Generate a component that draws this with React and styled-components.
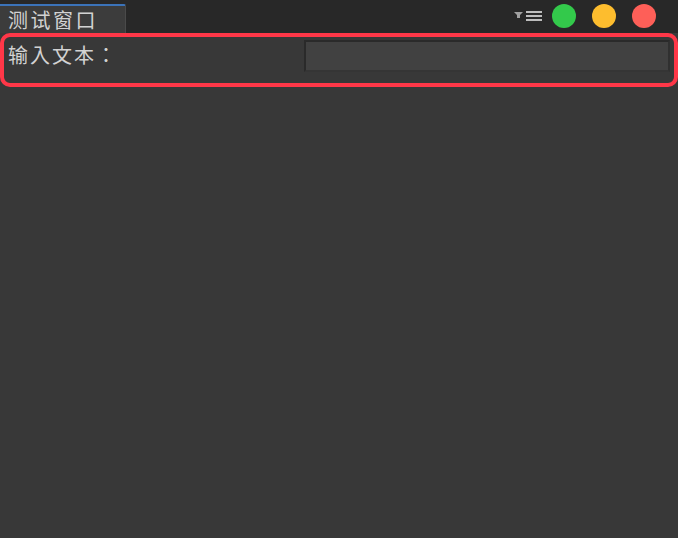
import styled, { createGlobalStyle } from "styled-components";

const Global = createGlobalStyle`
  html, body {
    margin: 0;
    padding: 0;
    background: #383838;
  }
  body {
    font-family: "Noto Sans CJK SC", "Noto Sans", sans-serif;
  }
`;

export default function App() {
  return (
    <Window>
      <Global />
      <Header>
        <Tab>测试窗口</Tab>
        <Controls>
          <MenuIcon width="28" height="12" viewBox="0 0 28 12">
            <path d="M0 2h9l-3 3v3h-3v-3z" fill="#a0a0a0" />
            <rect x="12" y="1" width="16" height="2" fill="#bdbdbd" />
            <rect x="12" y="5" width="16" height="2" fill="#bdbdbd" />
            <rect x="12" y="9" width="16" height="2" fill="#bdbdbd" />
          </MenuIcon>
          <Dot $color="#33c94b" />
          <Dot $color="#fdbd2e" />
          <Dot $color="#fe5f58" />
        </Controls>
      </Header>
      <Row>
        <Label>输入文本：</Label>
        <TextInput />
      </Row>
    </Window>
  );
}

const Window = styled.div`
  width: 678px;
  height: 538px;
  background: #383838;
  overflow: hidden;
`;

const Header = styled.div`
  height: 33px;
  background: #282828;
  display: flex;
  align-items: flex-end;
  justify-content: space-between;
`;

const Tab = styled.div`
  box-sizing: border-box;
  width: 126px;
  height: 29px;
  padding: 1px 0 0 8px;
  background: #3c3c3c;
  border-top: 2px solid #3b73b9;
  border-right: 1px solid #4a4a4a;
  border-top-right-radius: 2px;
  color: #d2d2d2;
  font-size: 20px;
  line-height: 26px;
  letter-spacing: 2.5px;
`;

const Controls = styled.div`
  display: flex;
  align-items: center;
  align-self: flex-start;
  gap: 16px;
  height: 32px;
  padding-right: 22px;
`;

const MenuIcon = styled.svg`
  margin-right: -6px;
`;

const Dot = styled.span`
  width: 24px;
  height: 24px;
  border-radius: 50%;
  background: ${(p) => p.$color};
`;

const Row = styled.div`
  box-sizing: border-box;
  height: 54px;
  border: 4px solid #ff3748;
  border-radius: 10px;
  display: flex;
  align-items: flex-start;
  padding: 3px 4px 0 4px;
`;

const Label = styled.div`
  flex: 1;
  color: #d2d2d2;
  font-family: "Noto Sans CJK JP", "Noto Sans CJK SC", sans-serif;
  font-size: 20px;
  line-height: 30px;
  letter-spacing: 2px;
`;

const TextInput = styled.input`
  width: 366px;
  height: 32px;
  margin: 0;
  box-sizing: border-box;
  background: #414141;
  border: 2px solid #2a2a2a;
  border-bottom-color: #353535;
  border-right-color: #303030;
  outline: none;
`;
